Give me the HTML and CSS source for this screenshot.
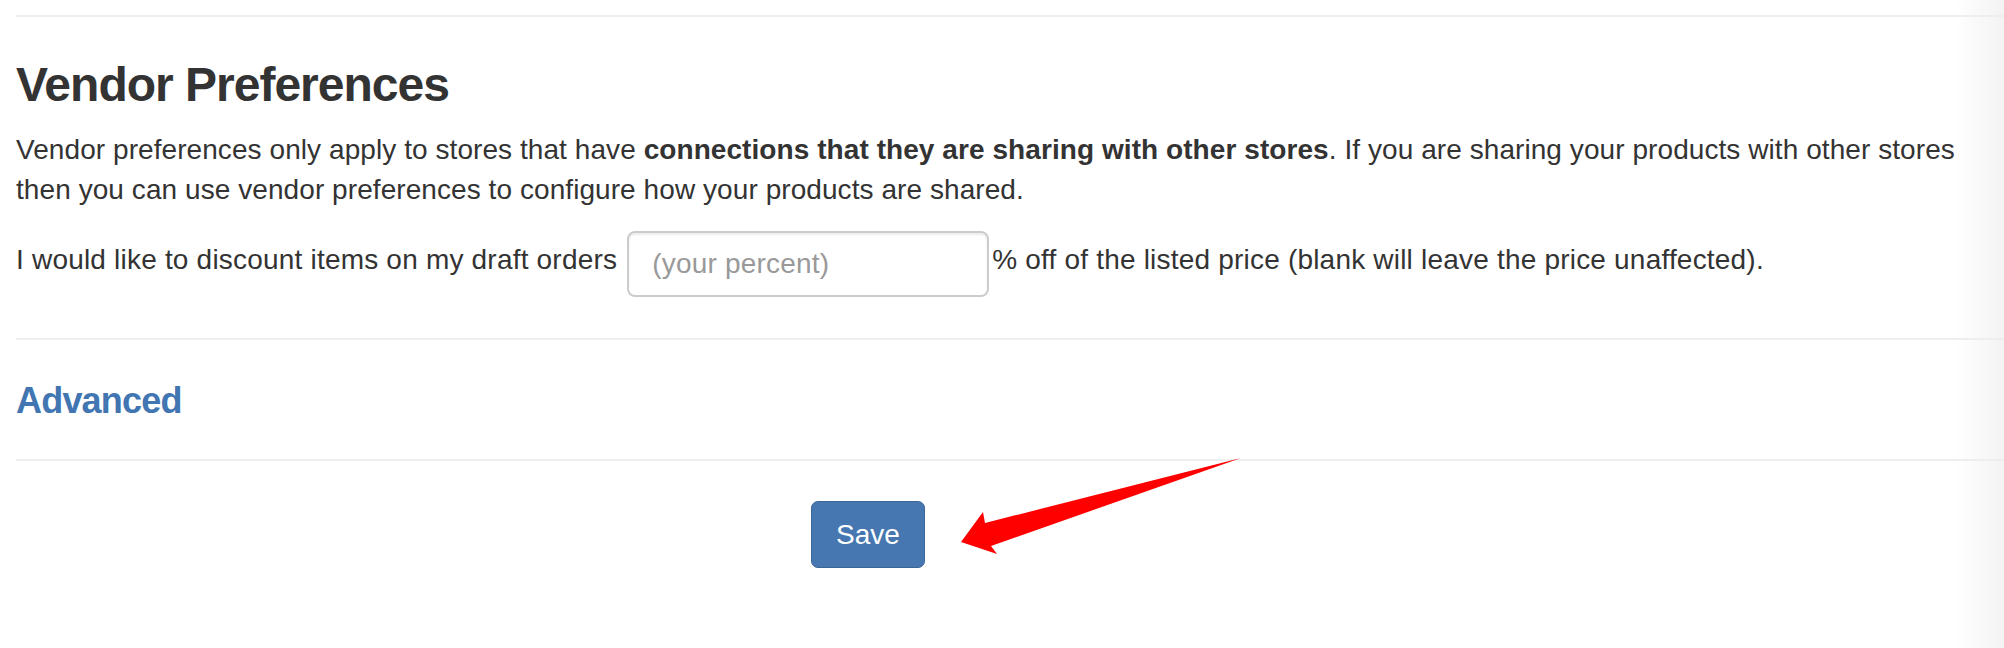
FILE: index.html
```html
<!DOCTYPE html>
<html lang="en">
<head>
<meta charset="utf-8">
<title>Vendor Preferences</title>
<link rel="stylesheet" href="styles.css">
</head>
<body>
<div class="page">
  <hr class="rule rule-top">
  <h2 class="title">Vendor Preferences</h2>
  <p class="desc">Vendor preferences only apply to stores that have <strong>connections that they are sharing with other stores</strong>. If you are sharing your products with other stores then you can use vendor preferences to configure how your products are shared.</p>
  <div class="discount-row">
    <span class="label-text">I would like to discount items on my draft orders</span>
    <input class="percent-input" type="text" placeholder="(your percent)">
    <span class="label-text after">% off of the listed price (blank will leave the price unaffected).</span>
  </div>
  <hr class="rule rule-mid">
  <h4 class="advanced"><a href="#">Advanced</a></h4>
  <hr class="rule rule-bottom">
  <div class="actions">
    <button class="btn-save" type="button">Save</button>
  </div>
</div>
<svg class="annotation" width="2004" height="648" viewBox="0 0 2004 648" aria-hidden="true">
  <path d="M961 542 L983 512 L985 523 L1241 458 L991 546 L997 554 Z" fill="#ff0000"/>
</svg>
</body>
</html>
```

FILE: styles.css
```css
html, body {
  margin: 0;
  padding: 0;
}

body {
  width: 2004px;
  height: 648px;
  overflow: hidden;
  position: relative;
  font-family: "Liberation Sans", Arial, Helvetica, sans-serif;
  color: #333333;
  background: linear-gradient(to right, #ffffff 1955px, #f3f3f3 2004px);
}

.page {
  padding: 0 0 0 16px;
}

.rule {
  border: 0;
  height: 2px;
  background: #eeeeee;
  margin: 0;
}

.rule-top {
  margin-top: 15px;
}

.title {
  margin: 42px 0 0;
  font-size: 48px;
  line-height: 52.8px;
  font-weight: 700;
  letter-spacing: -1px;
  color: #333333;
}

.desc {
  margin: 18px 0 0;
  padding-right: 16px;
  font-size: 28px;
  line-height: 40px;
  letter-spacing: 0.07px;
}

.desc strong {
  font-weight: 700;
}

.discount-row {
  margin-top: 21px;
  display: flex;
  align-items: center;
  font-size: 28px;
  line-height: 37px;
  letter-spacing: 0.2px;
}

.label-text {
  padding-bottom: 8px;
  white-space: nowrap;
}

.percent-input {
  box-sizing: border-box;
  width: 362px;
  height: 66px;
  margin: 0 3px 0 10px;
  padding: 0 20px 0 23px;
  border: 2px solid #cccccc;
  border-radius: 8px;
  box-shadow: inset 0 2px 2px rgba(0, 0, 0, 0.075);
  font-family: "Liberation Sans", Arial, Helvetica, sans-serif;
  font-size: 28px;
  letter-spacing: 0.2px;
  color: #555555;
  background: #ffffff;
  outline: none;
}

.percent-input::placeholder {
  color: #999999;
}

.rule-mid {
  margin-top: 41px;
}

.advanced {
  margin: 41px 0 0;
  font-size: 36px;
  line-height: 39.6px;
  font-weight: 700;
  letter-spacing: -0.8px;
}

.advanced a {
  color: #4176b2;
  text-decoration: none;
}

.rule-bottom {
  margin-top: 39px;
}

.actions {
  display: flex;
  padding: 40px 0 0 795px;
}

.btn-save {
  box-sizing: border-box;
  width: 114px;
  height: 67px;
  padding: 14px 0;
  border: 1px solid #3a6699;
  border-radius: 7px;
  background: #4677b0;
  color: #ffffff;
  font-family: "Liberation Sans", Arial, Helvetica, sans-serif;
  font-size: 28px;
  line-height: 37px;
  text-align: center;
}

.annotation {
  position: absolute;
  left: 0;
  top: 0;
  pointer-events: none;
}
```
